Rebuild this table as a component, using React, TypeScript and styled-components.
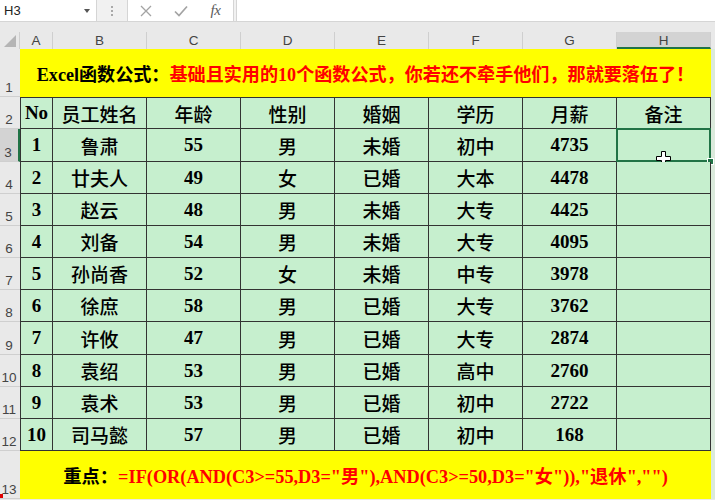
import React from 'react';
import styled, { createGlobalStyle, css } from 'styled-components';

const GlobalStyle = createGlobalStyle`
  html, body { margin: 0; padding: 0; }
  body {
    width: 715px;
    height: 500px;
    overflow: hidden;
    background: #e9e9e9;
    font-family: "Liberation Sans", Arial, sans-serif;
  }
`;

const SERIF = `"Liberation Serif", "Noto Sans CJK SC", serif`;
const UI = `"Liberation Sans", "Noto Sans", Arial, sans-serif`;

const Window = styled.div`
  display: flex;
  flex-direction: column;
  width: 715px;
  height: 500px;
  overflow: hidden;
  background: #e9e9e9;
`;

const FormulaBar = styled.div`
  display: flex;
  height: 22px;
  flex: none;
  background: #f1f1f1;
  border-bottom: 1px solid #d5d5d5;
  box-sizing: border-box;
`;

const NameBox = styled.div`
  width: 97px;
  background: #fff;
  border-right: 1px solid #d5d5d5;
  box-sizing: border-box;
  display: flex;
  align-items: center;
  justify-content: space-between;
  padding: 0 6px 0 4px;
  font: 13px ${UI};
  color: #222;
`;

const DropArrow = styled.span`
  width: 0;
  height: 0;
  border-left: 3px solid transparent;
  border-right: 3px solid transparent;
  border-top: 4px solid #555;
`;

const Splitter = styled.div`
  width: 30px;
  display: flex;
  flex-direction: column;
  align-items: center;
  justify-content: center;
  gap: 2px;
`;

const Dot = styled.span`
  width: 2px;
  height: 2px;
  background: #a9a9a9;
`;

const ButtonBox = styled.div`
  width: 107px;
  background: #fff;
  border-left: 1px solid #d5d5d5;
  border-right: 1px solid #d5d5d5;
  box-sizing: border-box;
  display: flex;
  align-items: center;
`;

const IconSlot = styled.div`
  width: 35px;
  display: flex;
  align-items: center;
  justify-content: center;
`;

const FxText = styled.span`
  font: italic 15px "Liberation Serif", serif;
  color: #5a5a5a;
  letter-spacing: -0.5px;
`;

const FormulaInput = styled.div`
  flex: 1;
  background: #fff;
  margin-left: 2px;
  border-left: 1px solid #d5d5d5;
`;

const Sheet = styled.div`
  display: grid;
  margin-top: 10px;
  grid-template-columns: 20px 33px repeat(7, 94px) 1fr;
  grid-template-rows: 17px 48px 32px 33px 32px 32px 32px 32px 32px 33px 32px 32px 32px 48px;
`;

const Corner = styled.div`
  display: flex;
  align-items: flex-end;
  justify-content: flex-end;
  padding: 0 3px 2px 0;
  border-right: 1px solid #cfcfcf;
  box-sizing: border-box;
`;

const CornerTriangle = styled.span`
  width: 12px;
  height: 12px;
  background: #b5b5b5;
  clip-path: polygon(100% 0, 100% 100%, 0 100%);
`;

const ColHeader = styled.div<{ $selected?: boolean }>`
  display: flex;
  align-items: center;
  justify-content: center;
  font: 13.5px ${UI};
  color: #444;
  border-right: 1px solid #cfcfcf;
  box-sizing: border-box;
  ${(p) =>
    p.$selected &&
    css`
      background: #d3d3d3;
      border-bottom: 2px solid #217346;
      padding-top: 2px;
    `}
`;

const RowHeader = styled.div<{ $selected?: boolean; $mark?: boolean }>`
  position: relative;
  display: flex;
  align-items: flex-end;
  justify-content: center;
  padding-right: 2px;
  font: 13.5px/16px ${UI};
  color: #444;
  border-bottom: 1px solid #cfcfcf;
  box-sizing: border-box;
  ${(p) =>
    p.$selected &&
    css`
      background: #d3d3d3;
      border-right: 2px solid #217346;
    `}
  ${(p) =>
    p.$mark &&
    css`
      &::before {
        content: '';
        position: absolute;
        left: 0;
        bottom: 0;
        width: 3px;
        height: 4px;
        background: #e00000;
      }
    `}
`;

const Banner = styled.div<{ $size: number }>`
  grid-column: span 8;
  background: #ffff00;
  display: flex;
  align-items: center;
  justify-content: center;
  font-family: ${SERIF};
  font-weight: 700;
  font-size: ${(p) => p.$size}px;
  color: #ff0000;
  white-space: nowrap;
`;

const Dark = styled.span`
  color: #000;
`;

const Stub = styled.div<{ $header?: boolean }>`
  background: ${(p) => (p.$header ? '#e9e9e9' : '#dbeadc')};
`;

const Cell = styled.div<{ $bold?: boolean; $top?: boolean; $first?: boolean }>`
  position: relative;
  background: #c6efce;
  border-right: 1px solid #333;
  border-bottom: 1px solid #333;
  ${(p) => p.$top && css`border-top: 1px solid #333;`}
  ${(p) => p.$first && css`border-left: 1px solid #333;`}
  box-sizing: border-box;
  display: flex;
  align-items: center;
  justify-content: center;
  font-family: ${SERIF};
  font-size: 19px;
  font-weight: ${(p) => (p.$bold ? 700 : 500)};
  color: #000;
  white-space: nowrap;
`;

const SelectionFrame = styled.div`
  position: absolute;
  top: -1px;
  left: -1px;
  right: -1px;
  bottom: -1px;
  border: 2px solid #217346;
  pointer-events: none;
`;

const FillHandle = styled.div`
  position: absolute;
  right: -4px;
  bottom: -4px;
  width: 5px;
  height: 5px;
  background: #217346;
  border: 1px solid #fff;
`;

const CursorMark = styled.svg`
  position: absolute;
  left: 39px;
  top: 22px;
  width: 15px;
  height: 15px;
`;

const headers = ['No', '员工姓名', '年龄', '性别', '婚姻', '学历', '月薪', '备注'];
const cols = ['A', 'B', 'C', 'D', 'E', 'F', 'G', 'H'];

const rows: [string, string, string, string, string, string, string][] = [
  ['1', '鲁肃', '55', '男', '未婚', '初中', '4735'],
  ['2', '廿夫人', '49', '女', '已婚', '大本', '4478'],
  ['3', '赵云', '48', '男', '未婚', '大专', '4425'],
  ['4', '刘备', '54', '男', '未婚', '大专', '4095'],
  ['5', '孙尚香', '52', '女', '未婚', '中专', '3978'],
  ['6', '徐庶', '58', '男', '已婚', '大专', '3762'],
  ['7', '许攸', '47', '男', '已婚', '大专', '2874'],
  ['8', '袁绍', '53', '男', '已婚', '高中', '2760'],
  ['9', '袁术', '53', '男', '已婚', '初中', '2722'],
  ['10', '司马懿', '57', '男', '已婚', '初中', '168'],
];

const boldCols = new Set([0, 2, 6]);

export default function App() {
  return (
    <>
      <GlobalStyle />
      <Window>
        <FormulaBar>
          <NameBox>
            <span>H3</span>
            <DropArrow />
          </NameBox>
          <Splitter>
            <Dot />
            <Dot />
            <Dot />
          </Splitter>
          <ButtonBox>
            <IconSlot>
              <svg width="12" height="12" viewBox="0 0 12 12">
                <path d="M1 1 L11 11 M11 1 L1 11" stroke="#a3a3a3" strokeWidth="1.3" fill="none" />
              </svg>
            </IconSlot>
            <IconSlot>
              <svg width="14" height="12" viewBox="0 0 14 12">
                <path d="M1 6.5 L5 10.5 L13 1.5" stroke="#a3a3a3" strokeWidth="1.7" fill="none" />
              </svg>
            </IconSlot>
            <IconSlot>
              <FxText>fx</FxText>
            </IconSlot>
          </ButtonBox>
          <FormulaInput />
        </FormulaBar>

        <Sheet>
          <Corner>
            <CornerTriangle />
          </Corner>
          {cols.map((c) => (
            <ColHeader key={c} $selected={c === 'H'}>
              {c}
            </ColHeader>
          ))}
          <Stub $header />

          <RowHeader>1</RowHeader>
          <Banner $size={18.1}>
            <Dark>Excel函数公式：</Dark>基础且实用的10个函数公式，你若还不牵手他们，那就要落伍了！
          </Banner>
          <Stub />

          <RowHeader>2</RowHeader>
          {headers.map((h, i) => (
            <Cell key={h} $top $first={i === 0} $bold={i === 0}>
              {h}
            </Cell>
          ))}
          <Stub />

          {rows.map((r, ri) => (
            <React.Fragment key={r[0]}>
              <RowHeader $selected={ri === 0}>{ri + 3}</RowHeader>
              {r.map((v, ci) => (
                <Cell key={ci} $first={ci === 0} $bold={boldCols.has(ci)}>
                  {v}
                </Cell>
              ))}
              <Cell>
                {ri === 0 && (
                  <>
                    <SelectionFrame />
                    <FillHandle />
                    <CursorMark viewBox="0 0 15 15">
                      <path
                        d="M5.5 0.5 H9.5 V5.5 H14.5 V9.5 H9.5 V14.5 H5.5 V9.5 H0.5 V5.5 H5.5 Z"
                        fill="#fff"
                        stroke="#000"
                        strokeWidth="1"
                      />
                    </CursorMark>
                  </>
                )}
              </Cell>
              <Stub />
            </React.Fragment>
          ))}

          <RowHeader $mark>13</RowHeader>
          <Banner $size={18.3}>
            <Dark>重点：</Dark>=IF(OR(AND(C3&gt;=55,D3="男"),AND(C3&gt;=50,D3="女")),"退休","")
          </Banner>
          <Stub />
        </Sheet>
      </Window>
    </>
  );
}
